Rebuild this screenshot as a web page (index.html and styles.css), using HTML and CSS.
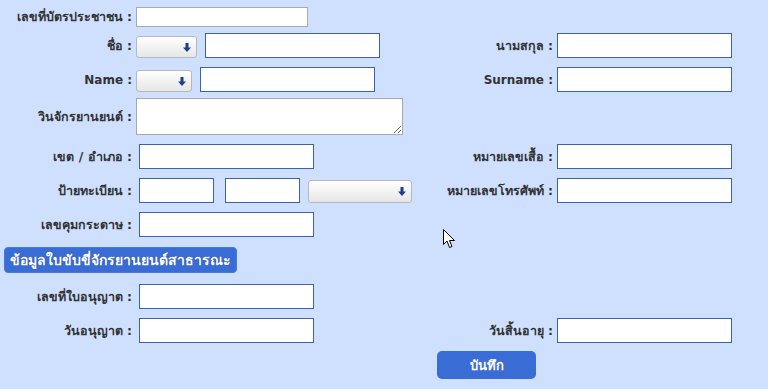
FILE: index.html
```html
<!DOCTYPE html>
<html lang="th">
<head>
<meta charset="utf-8">
<title>ข้อมูลผู้ขับขี่</title>
<link rel="stylesheet" href="styles.css">
</head>
<body>
<form class="form">
  <div class="row r1">
    <div class="col-left">
      <label class="lbl">เลขที่บัตรประชาชน :</label>
      <div class="ctrls c4"><input class="inp inp-gray w172" type="text"></div>
    </div>
  </div>

  <div class="row r2">
    <div class="col-left">
      <label class="lbl">ชื่อ :</label>
      <div class="ctrls c4">
        <div class="sel w61"><svg class="arr" width="8" height="9" viewBox="0 0 8 9"><path d="M2.5 0 H5.5 V4.5 H8 L4 9 L0 4.5 H2.5 Z"/></svg></div>
        <input class="inp w175" type="text">
      </div>
    </div>
    <div class="col-right">
      <label class="lbl-r">นามสกุล :</label>
      <input class="inp w175" type="text">
    </div>
  </div>

  <div class="row r3">
    <div class="col-left">
      <label class="lbl en">Name :</label>
      <div class="ctrls c4">
        <div class="sel w56"><svg class="arr" width="8" height="9" viewBox="0 0 8 9"><path d="M2.5 0 H5.5 V4.5 H8 L4 9 L0 4.5 H2.5 Z"/></svg></div>
        <input class="inp w175" type="text">
      </div>
    </div>
    <div class="col-right">
      <label class="lbl-r en">Surname :</label>
      <input class="inp w175" type="text">
    </div>
  </div>

  <div class="row r4">
    <div class="col-left">
      <label class="lbl">วินจักรยานยนต์ :</label>
      <div class="ctrls c4"><textarea class="ta"></textarea></div>
    </div>
  </div>

  <div class="row r5">
    <div class="col-left">
      <label class="lbl">เขต / อำเภอ :</label>
      <div class="ctrls c7"><input class="inp w175" type="text"></div>
    </div>
    <div class="col-right">
      <label class="lbl-r">หมายเลขเสื้อ :</label>
      <input class="inp w175" type="text">
    </div>
  </div>

  <div class="row r6">
    <div class="col-left">
      <label class="lbl">ป้ายทะเบียน :</label>
      <div class="ctrls c7">
        <input class="inp w75" type="text">
        <input class="inp w75 ml11" type="text">
        <div class="sel w104 h23"><svg class="arr" width="8" height="9" viewBox="0 0 8 9"><path d="M2.5 0 H5.5 V4.5 H8 L4 9 L0 4.5 H2.5 Z"/></svg></div>
      </div>
    </div>
    <div class="col-right">
      <label class="lbl-r">หมายเลขโทรศัพท์ :</label>
      <input class="inp w175" type="text">
    </div>
  </div>

  <div class="row r7">
    <div class="col-left">
      <label class="lbl">เลขคุมกระดาษ :</label>
      <div class="ctrls c7"><input class="inp w175" type="text"></div>
    </div>
  </div>

  <div class="section">
    <span class="section-title">ข้อมูลใบขับขี่จักรยานยนต์สาธารณะ</span>
  </div>

  <div class="row r8">
    <div class="col-left">
      <label class="lbl">เลขที่ใบอนุญาต :</label>
      <div class="ctrls c7"><input class="inp w175" type="text"></div>
    </div>
  </div>

  <div class="row r9">
    <div class="col-left">
      <label class="lbl">วันอนุญาต :</label>
      <div class="ctrls c7"><input class="inp w175" type="text"></div>
    </div>
    <div class="col-right">
      <label class="lbl-r">วันสิ้นอายุ :</label>
      <input class="inp w175" type="text">
    </div>
  </div>

  <div class="actions">
    <button class="btn-save" type="button">บันทึก</button>
  </div>
</form>

<svg class="cursor" width="13" height="20" viewBox="0 0 13 20">
  <path d="M0.5 0.5 L0.5 15.5 L4 12 L6.5 18.5 L9 17.5 L6.5 11.5 L11.5 11.5 Z" fill="#fff" stroke="#000" stroke-width="1" stroke-linejoin="miter"/>
</svg>
</body>
</html>
```

FILE: styles.css
```css
html, body {
  margin: 0;
  padding: 0;
}
body {
  background: #cfdffe;
  width: 768px;
  height: 389px;
  overflow: hidden;
  position: relative;
  font-family: Tahoma, "DejaVu Sans", "Noto Sans", sans-serif;
  color: #333;
}
.form {
  display: flex;
  flex-direction: column;
  padding-top: 7px;
}
.row {
  display: flex;
  align-items: flex-end;
}
.r2 { margin-top: 6px; }
.r3 { margin-top: 9px; }
.r4 { margin-top: 6px; }
.r5 { margin-top: 9px; }
.r6 { margin-top: 9px; }
.r7 { margin-top: 9px; }
.r8 { margin-top: 11px; }
.r9 { margin-top: 9px; }

.col-left {
  width: 420px;
  display: flex;
  align-items: center;
}
.col-right {
  display: flex;
  align-items: center;
}
.lbl {
  width: 132px;
  text-align: right;
  font-size: 12.5px;
  font-weight: bold;
  white-space: nowrap;
}
.lbl-r {
  width: 133px;
  text-align: right;
  font-size: 12.5px;
  font-weight: bold;
  white-space: nowrap;
  margin-right: 4px;
}
.en { font-size: 12px; }
.ctrls {
  display: flex;
  align-items: flex-end;
}
.c4 { margin-left: 4px; }
.c7 { margin-left: 7px; }

.inp {
  box-sizing: border-box;
  height: 25px;
  margin: 0;
  padding: 0 3px;
  background: #fff;
  border: 1px solid #3b62b0;
  border-radius: 0;
  outline: none;
  font-family: inherit;
}
.inp-gray {
  height: 20px;
  border-color: #a9a9a9;
}
.w172 { width: 172px; }
.w175 { width: 175px; }
.w75 { width: 75px; }
.ml11 { margin-left: 11px; }

.sel {
  box-sizing: border-box;
  height: 22px;
  border: 1px solid #b8b8b8;
  border-radius: 3px;
  background: linear-gradient(#ffffff, #e6e6e6);
  display: flex;
  align-items: center;
  justify-content: flex-end;
  padding-right: 5px;
  margin-right: 8px;
}
.w61 { width: 61px; }
.w56 { width: 56px; }
.w104 { width: 104px; margin-left: 8px; margin-right: 0; }
.h23 { height: 23px; }
.arr {
  fill: #1b3f8e;
  display: block;
}

.ta {
  box-sizing: border-box;
  width: 267px;
  height: 37px;
  margin: 0;
  border: 1px solid #a9a9a9;
  background: #fff;
  resize: both;
}

.section {
  margin-top: 10px;
  padding-left: 4px;
  display: flex;
}
.section-title {
  box-sizing: border-box;
  width: 233px;
  height: 26px;
  background: #3a6cd6;
  border: 1px solid #4a78d8;
  border-radius: 4px;
  color: #fff;
  font-weight: bold;
  font-size: 14px;
  display: flex;
  align-items: center;
  padding-left: 5px;
  white-space: nowrap;
  text-shadow: 0 0 1px #1d3f8a;
}

.actions {
  margin-top: 8px;
  padding-left: 437px;
  display: flex;
}
.btn-save {
  width: 99px;
  height: 28px;
  background: #3a6cd6;
  border: none;
  border-radius: 5px;
  color: #fff;
  font-weight: bold;
  font-size: 13px;
  font-family: inherit;
  padding: 0;
}

.cursor {
  position: absolute;
  left: 443px;
  top: 229px;
}
```
